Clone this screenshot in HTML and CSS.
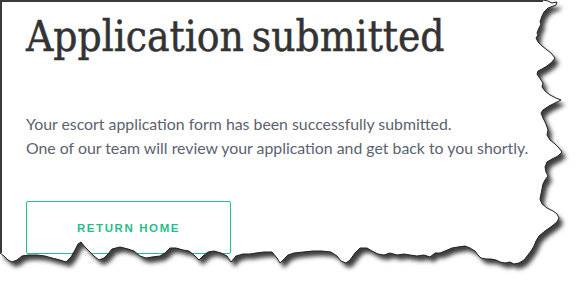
FILE: index.html
```html
<!DOCTYPE html>
<html>
<head>
<meta charset="utf-8">
<link rel="stylesheet" href="styles.css">
</head>
<body>
<div class="page">
  <h1 class="title">Application submitted</h1>
  <div class="message">
    <p class="line">Your escort application form has been successfully submitted.</p>
    <p class="line">One of our team will review your application and get back to you shortly.</p>
  </div>
  <a class="btn" href="#">RETURN HOME</a>
</div>
<svg class="torn" width="583" height="288" viewBox="0 0 583 288" xmlns="http://www.w3.org/2000/svg">
  <defs>
    <path id="paper" d="M0,0 L543,0 L548,1 L552,3 L557,2 L556,5 L548,8 L544,12 L543,14 L542,16 L540,22 L541,24 L539,28 L537,33 L538,35 L536,38 L538,42 L542,46 L547,50 L551,53 L555,58 L552,62 L547,66 L542,69 L538,71 L537,74 L539,77 L541,80 L543,83 L542,87 L545,91 L550,95 L556,98 L561,100 L555,103 L549,106 L543,110 L541,113 L543,118 L546,124 L548,130 L547,135 L550,140 L555,144 L559,148 L562,152 L558,156 L552,159 L547,162 L545,167 L546,172 L548,176 L545,180 L543,184 L542,189 L541,194 L540,199 L542,204 L547,208 L553,211 L557,214 L559,218 L557,222 L552,226 L545,231 L539,236 L536,241 L534,246 L531,251 L528,255 L524,260 L519,263 L514,264 L510,262 L505,263 L500,262 L496,260 L491,259 L486,259 L481,258 L478,255 L475,251 L470,248 L465,246 L458,247 L452,248 L445,251 L440,253 L435,253 L430,257 L424,255 L417,256 L410,255 L404,254 L397,255 L390,253 L384,255 L378,254 L372,251 L367,248 L360,248 L355,253 L350,260 L346,263 L341,261 L337,256 L331,252 L322,251 L313,251 L303,252 L294,253 L288,255 L283,260 L280,263 L277,258 L272,252 L264,252 L256,253 L250,254 L243,254 L236,256 L231,262 L227,256 L221,253 L214,251 L208,252 L203,256 L199,260 L194,255 L189,251 L183,250 L176,248 L170,248 L165,253 L160,256 L152,257 L146,258 L140,256 L134,251 L128,249 L120,247 L112,249 L108,254 L104,258 L99,260 L94,256 L89,251 L85,247 L81,242 L78,244 L75,250 L71,257 L66,262 L60,260 L52,258 L45,256 L37,255 L28,255 L22,256 L17,260 L12,262 L8,260 L4,256 L0,253 Z"/>
    <mask id="outside" maskUnits="userSpaceOnUse" x="0" y="0" width="583" height="288">
      <rect x="0" y="0" width="583" height="288" fill="#fff"/>
      <use href="#paper" fill="#000"/>
    </mask>
    <filter id="blur" x="-10%" y="-10%" width="120%" height="120%">
      <feGaussianBlur stdDeviation="2"/>
    </filter>
  </defs>
  <g mask="url(#outside)">
    <rect x="0" y="0" width="583" height="288" fill="#fff"/>
    <use href="#paper" fill="#3e3e3e" transform="translate(4,5)" filter="url(#blur)"/>
  </g>
  <use href="#paper" fill="none" stroke="#222" stroke-width="1"/>
  <rect x="0" y="0" width="543" height="2" fill="#3a3a3a"/>
  <rect x="0" y="0" width="2" height="253" fill="#3a3a3a"/>
</svg>
</body>
</html>
```
FILE: styles.css
```css
html, body {
  margin: 0;
  padding: 0;
  background: #fff;
}
body {
  width: 583px;
  height: 288px;
  overflow: hidden;
  position: relative;
}
.page {
  padding: 14px 0 0 26px;
}
.title {
  margin: 0;
  font-family: "DejaVu Serif Condensed", "Liberation Serif", serif;
  font-weight: normal;
  font-size: 42px;
  line-height: 45px;
  word-spacing: -4px;
  color: #333;
  -webkit-text-stroke: 0.5px #333;
}
.message {
  margin-top: 53px;
  font-family: Lato, sans-serif;
  font-size: 15.85px;
  line-height: 24px;
  color: #5b6270;
}
.line {
  margin: 0;
}
.btn {
  display: flex;
  align-items: center;
  justify-content: center;
  box-sizing: border-box;
  margin-top: 41px;
  width: 205px;
  height: 53px;
  border: 1px solid #22c08c;
  border-radius: 2px;
  font-family: "Liberation Sans", sans-serif;
  font-weight: bold;
  font-size: 11.5px;
  letter-spacing: 1.6px;
  color: #28bd8c;
  text-decoration: none;
}
.torn {
  position: absolute;
  left: 0;
  top: 0;
  pointer-events: none;
}
```
